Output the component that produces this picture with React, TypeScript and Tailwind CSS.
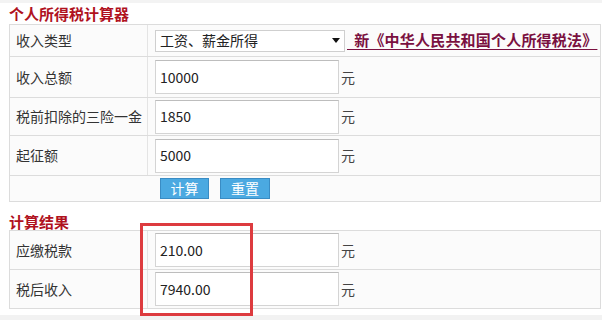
import React from "react";

const font = { fontFamily: '"Noto Sans CJK SC", "Noto Sans", sans-serif' };

function Row({ label, children, h }: { label: string; children: React.ReactNode; h: string }) {
  return (
    <div className={`flex border-t border-[#dcdcdc] ${h}`}>
      <div className="w-[138px] shrink-0 border-r border-[#e4e4e4] flex items-center pl-[6px] text-[14px] text-[#333]">
        {label}
      </div>
      <div className="flex items-center pl-[7px] flex-1">{children}</div>
    </div>
  );
}

function Input({ value }: { value: string }) {
  return (
    <div className="flex items-center">
      <div className="w-[184px] h-[34px] bg-white border border-[#d4d4d4] border-t-[#bdbdbd] flex items-center pl-[4px] text-[14px] text-[#222]">
        {value}
      </div>
      <span className="ml-[2px] text-[14px] text-[#444]">元</span>
    </div>
  );
}

export default function App() {
  return (
    <div className="w-[602px] h-[320px] bg-white relative overflow-hidden" style={font}>
      <div className="h-[3px] bg-[#f3f3f3]" />
      <div className="pl-[9px] h-[21px] flex items-center text-[15px] font-bold text-[#b0121e] leading-none">
        个人所得税计算器
      </div>
      <div className="ml-[9px] w-[592px] border-l border-r border-[#dcdcdc] bg-[#fbfbfb]">
        <Row label="收入类型" h="h-[32px]">
          <div className="flex items-center">
            <div className="w-[190px] h-[22px] bg-white border border-[#cfcfcf] flex items-center justify-between pl-[4px] pr-[4px] text-[14px] text-[#222]">
              <span>工资、薪金所得</span>
              <svg width="8" height="5" viewBox="0 0 8 5">
                <path d="M0 0 L8 0 L4 5 Z" fill="#111" />
              </svg>
            </div>
            <span className="ml-[2px] text-[15px] font-bold text-[#7a1040] underline underline-offset-[3px] whitespace-pre tracking-[0.2px]">
              {"  新《中华人民共和国个人所得税法》"}
            </span>
          </div>
        </Row>
        <Row label="收入总额" h="h-[41px]">
          <Input value="10000" />
        </Row>
        <Row label="税前扣除的三险一金" h="h-[38px]">
          <Input value="1850" />
        </Row>
        <Row label="起征额" h="h-[40px]">
          <Input value="5000" />
        </Row>
        <div className="flex border-t border-[#dcdcdc] h-[27px] border-b">
          <div className="w-[138px] shrink-0" />
          <div className="flex items-center pl-[12px] gap-[11px]">
            <div className="w-[49px] h-[21px] bg-[#4ba9e1] border border-[#3a8cc4] text-white text-[14px] flex items-center justify-center">
              计算
            </div>
            <div className="w-[50px] h-[21px] bg-[#4ba9e1] border border-[#3a8cc4] text-white text-[14px] flex items-center justify-center">
              重置
            </div>
          </div>
        </div>
      </div>
      <div className="pl-[9px] h-[28px] pt-[10px] flex items-center text-[15px] font-bold text-[#b0121e] leading-none">
        计算结果
      </div>
      <div className="ml-[9px] w-[592px] border-l border-r border-b border-[#dcdcdc] bg-[#fbfbfb]">
        <Row label="应缴税款" h="h-[39px]">
          <Input value="210.00" />
        </Row>
        <Row label="税后收入" h="h-[39px]">
          <Input value="7940.00" />
        </Row>
      </div>
      <div className="h-[20px] mt-[6px] bg-[#f2f2f2]" />
      <div className="absolute left-[140px] top-[223px] w-[113px] h-[93px] border-[3px] border-[#dd3b3f]" />
    </div>
  );
}
